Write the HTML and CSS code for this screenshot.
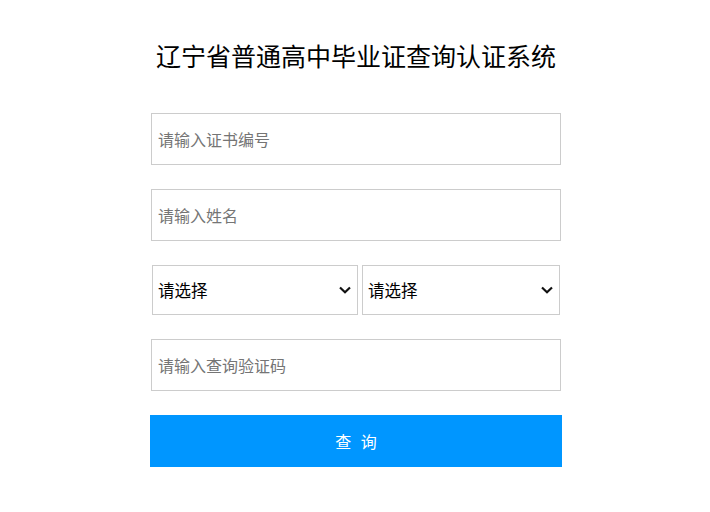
FILE: index.html
```html
<!DOCTYPE html>
<html>
<head>
  <meta charset="utf-8">
  <title>辽宁省普通高中毕业证查询认证系统</title>
  <link rel="stylesheet" href="styles.css">
</head>
<body>
  <div class="container">
    <h1>辽宁省普通高中毕业证查询认证系统</h1>

    <form onSubmit="return false">
      <input type="text" class="field" placeholder="请输入证书编号">
      <input type="text" class="field" placeholder="请输入姓名">

      <div class="selects">
        <select class="pick pick-left">
          <option>请选择</option>
        </select>
        <select class="pick pick-right">
          <option>请选择</option>
        </select>
      </div>

      <input type="text" class="field" placeholder="请输入查询验证码">

      <button type="submit" class="submit">查 询</button>
    </form>
  </div>
</body>
</html>
```

FILE: styles.css
```css
body {
  margin: 0;
  font-family: "Noto Sans CJK SC", "Liberation Sans", sans-serif;
  background: #fff;
  color: #000;
}

.container {
  width: 412px;
  margin-left: calc(50% - 205px);
  padding-top: 40px;
}

h1 {
  margin: 0 0 43px;
  font-size: 25px;
  line-height: 30px;
  font-weight: normal;
  text-align: center;
}

form {
  display: flex;
  flex-direction: column;
  gap: 24px;
}

.field {
  box-sizing: border-box;
  display: block;
  width: 410px;
  height: 52px;
  margin: 0 1px;
  padding: 0 6px;
  border: 1px solid #ccc;
  border-radius: 0;
  font-family: inherit;
  font-size: 16px;
  outline: none;
}

.field::placeholder {
  color: #757575;
}

.selects {
  display: flex;
  gap: 4px;
  margin-left: 2px;
}

.pick {
  box-sizing: border-box;
  height: 50px;
  padding: 0 24px 0 5px;
  border: 1px solid #ccc;
  border-radius: 0;
  -webkit-appearance: none;
  appearance: none;
  background: #fff url("data:image/svg+xml;utf8,<svg xmlns='http://www.w3.org/2000/svg' width='12' height='8' viewBox='0 0 12 8'><path d='M1 1.5 6 6.2 11 1.5' fill='none' stroke='%23111' stroke-width='2.2'/></svg>") no-repeat right 6px center;
  font-family: inherit;
  font-size: 16.5px;
  color: #000;
}

.pick-left {
  width: 206px;
}

.pick-right {
  width: 198px;
}

.submit {
  display: block;
  width: 412px;
  height: 52px;
  padding: 0 0 0 3px;
  border: none;
  background: #0096ff;
  color: #fff;
  font-family: inherit;
  font-size: 16px;
  letter-spacing: 3px;
  cursor: pointer;
}
```
